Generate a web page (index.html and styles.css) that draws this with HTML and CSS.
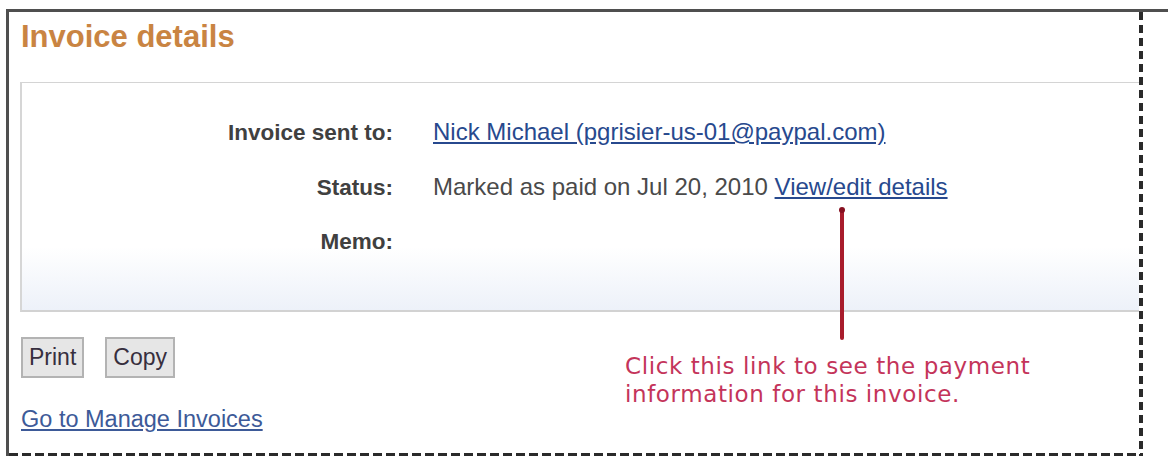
FILE: index.html
```html
<!DOCTYPE html>
<html lang="en">
<head>
<meta charset="utf-8">
<title>Invoice details</title>
<link rel="stylesheet" href="styles.css">
</head>
<body>
<div class="page">
  <div class="topline"></div>
  <div class="frame">
    <h1 class="title">Invoice details</h1>
    <div class="panel">
      <div class="details">
        <div class="label">Invoice sent to:</div>
        <div class="value"><a href="#" class="link">Nick Michael (pgrisier-us-01@paypal.com)</a></div>
        <div class="label">Status:</div>
        <div class="value">Marked as paid on Jul 20, 2010 <a href="#" class="link">View/edit details</a></div>
        <div class="label">Memo:</div>
        <div class="value"></div>
      </div>
    </div>
    <div class="buttons">
      <button class="btn" type="button">Print</button>
      <button class="btn" type="button">Copy</button>
    </div>
    <a href="#" class="link manage">Go to Manage Invoices</a>
  </div>
  <div class="pointer"></div>
  <div class="callout">Click this link to see the payment<br>information for this invoice.</div>
</div>
</body>
</html>
```

FILE: styles.css
```css
html, body {
  margin: 0;
  padding: 0;
  background: #ffffff;
}

body {
  font-family: "Liberation Sans", Arial, sans-serif;
  width: 1168px;
  height: 462px;
  overflow: hidden;
}

.page {
  position: relative;
  padding-top: 9px;
}

.topline {
  margin-left: 6px;
  height: 3px;
  background: #4f4f4f;
}

.frame {
  box-sizing: border-box;
  margin-left: 6px;
  width: 1137px;
  height: 444px;
  border-left: 3px solid #4f4f4f;
  padding: 0 4px 3px 12px;
  background:
    repeating-linear-gradient(to right, #2a2a2a 0, #2a2a2a 9px, transparent 9px, transparent 13px) left bottom / 100% 3px no-repeat,
    repeating-linear-gradient(to bottom, #2a2a2a 0, #2a2a2a 8px, transparent 8px, transparent 13px) right top / 4px 100% no-repeat;
  display: flex;
  flex-direction: column;
  align-items: flex-start;
}

.title {
  margin: 7px 0 0 0;
  font-size: 31px;
  line-height: 36px;
  font-weight: bold;
  color: #c98442;
}

.panel {
  align-self: stretch;
  margin-top: 27px;
  border-top: 1px solid #d4d4d4;
  border-left: 2px solid #d6d6d6;
  border-bottom: 2px solid #d2d2d2;
  padding: 21px 0 41px 0;
  margin-left: -1px;
  background: linear-gradient(to bottom, #ffffff 0%, #ffffff 72%, #edf1f9 100%);
}

.details {
  display: grid;
  grid-template-columns: 371px 1fr;
  column-gap: 40px;
  grid-auto-rows: 55px;
  align-items: baseline;
}

.label {
  text-align: right;
  font-size: 22.5px;
  line-height: 55px;
  font-weight: bold;
  color: #404040;
}

.value {
  font-size: 24px;
  line-height: 55px;
  color: #4a4a4a;
  white-space: nowrap;
}

.link {
  color: #27498e;
  text-decoration: underline;
}

.buttons {
  display: flex;
  gap: 21px;
  margin-top: 25px;
}

.btn {
  font-family: "Liberation Sans", Arial, sans-serif;
  font-size: 23px;
  line-height: 26px;
  padding: 5px 6px 6px 6px;
  margin: 0;
  border: 2px solid #b3b3b3;
  border-radius: 0;
  background: #e6e6e6;
  color: #372f3e;
}

.manage {
  margin-top: 28px;
  font-size: 23.5px;
  line-height: 27px;
  color: #3d5a98;
}

.pointer {
  position: absolute;
  left: 840px;
  top: 209px;
  width: 4px;
  height: 131px;
  background: #a81c2c;
  border-radius: 2px;
}

.pointer::before {
  content: "";
  position: absolute;
  left: -1px;
  top: -2px;
  width: 6px;
  height: 6px;
  border-radius: 50%;
  background: #861020;
}

.pointer::after {
  content: "";
  position: absolute;
  left: 8px;
  top: 10px;
  width: 4px;
  height: 132px;
  background: rgba(0, 0, 0, 0.2);
  filter: blur(3px);
  z-index: -1;
}

.callout {
  position: absolute;
  left: 625px;
  top: 352px;
  font-family: "DejaVu Sans", Verdana, sans-serif;
  font-size: 23px;
  letter-spacing: 0.6px;
  line-height: 28px;
  color: #c4345a;
  white-space: nowrap;
}
```
